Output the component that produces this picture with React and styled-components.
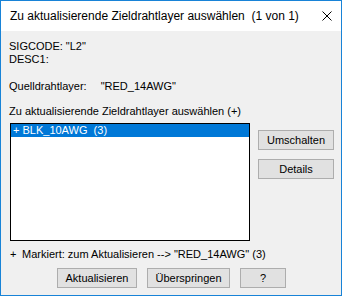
import React from 'react';
import styled, { createGlobalStyle } from 'styled-components';

const GlobalStyle = createGlobalStyle`
  html, body {
    margin: 0;
    padding: 0;
    background: #ffffff;
  }
  * { box-sizing: border-box; }
`;

const Window = styled.div`
  width: 342px;
  height: 296px;
  border: 1px solid #1883d7;
  background: #f0f0f0;
  display: flex;
  flex-direction: column;
  font-family: 'Liberation Sans', Arial, sans-serif;
  font-size: 11px;
  color: #000;
  overflow: hidden;
`;

const TitleBar = styled.div`
  height: 30px;
  background: #ffffff;
  display: flex;
  align-items: center;
  justify-content: space-between;
  padding: 0 9px 0 9px;
  font-size: 12px;
  white-space: pre;
  flex-shrink: 0;
`;

const CloseIcon = styled.svg`
  width: 10px;
  height: 10px;
`;

const Body = styled.div`
  flex: 1;
  display: flex;
  flex-direction: column;
  padding: 9px 7px 0 8px;
`;

const Line = styled.div`
  line-height: 13px;
  height: 13px;
  white-space: pre;
  margin-top: ${p => p.$gap || 0}px;
`;

const Value = styled.span`
  margin-left: 14px;
`;

const Middle = styled.div`
  display: flex;
  margin-top: 5px;
`;

const ListBox = styled.div`
  width: 241px;
  height: 118px;
  margin-left: 1px;
  border: 1px solid #000;
  background: #fff;
  display: flex;
  flex-direction: column;
`;

const ListItem = styled.div`
  height: 13px;
  line-height: 13px;
  padding-left: 2px;
  white-space: pre;
  background: ${p => (p.$selected ? '#0078d7' : 'transparent')};
  color: ${p => (p.$selected ? '#fff' : '#000')};
`;

const SideButtons = styled.div`
  display: flex;
  flex-direction: column;
  gap: 9px;
  margin-left: 8px;
  margin-top: 7px;
`;

const Button = styled.button`
  width: ${p => p.$w}px;
  height: 20px;
  padding: 0;
  border: 1px solid #adadad;
  background: #e1e1e1;
  font-family: 'Liberation Sans', Arial, sans-serif;
  font-size: 11px;
  color: #000;
  display: flex;
  align-items: center;
  justify-content: center;
`;

const Legend = styled.div`
  display: flex;
  line-height: 13px;
  margin-top: 7px;
  margin-left: 1px;
  white-space: pre;
`;

const Plus = styled.span`
  width: 12px;
`;

const Footer = styled.div`
  display: flex;
  gap: 10px;
  margin-top: 7px;
  padding-left: 48px;
`;

export default function App() {
  return (
    <>
      <GlobalStyle />
      <Window>
        <TitleBar>
          <span>Zu aktualisierende Zieldrahtlayer auswählen  (1 von 1)</span>
          <CloseIcon viewBox="0 0 10 10">
            <path d="M0.5 0.5 L9.5 9.5 M9.5 0.5 L0.5 9.5" stroke="#000" strokeWidth="1" fill="none" />
          </CloseIcon>
        </TitleBar>
        <Body>
          <Line>SIGCODE: "L2"</Line>
          <Line>DESC1:</Line>
          <Line $gap={14}>
            Quelldrahtlayer:<Value>"RED_14AWG"</Value>
          </Line>
          <Line $gap={12}>Zu aktualisierende Zieldrahtlayer auswählen (+)</Line>
          <Middle>
            <ListBox>
              <ListItem $selected>+ BLK_10AWG  (3)</ListItem>
            </ListBox>
            <SideButtons>
              <Button $w={76}>Umschalten</Button>
              <Button $w={76}>Details</Button>
            </SideButtons>
          </Middle>
          <Legend>
            <Plus>+</Plus>
            <span>Markiert: zum Aktualisieren --&gt; "RED_14AWG" (3)</span>
          </Legend>
          <Footer>
            <Button $w={80}>Aktualisieren</Button>
            <Button $w={83}>Überspringen</Button>
            <Button $w={46}>?</Button>
          </Footer>
        </Body>
      </Window>
    </>
  );
}
